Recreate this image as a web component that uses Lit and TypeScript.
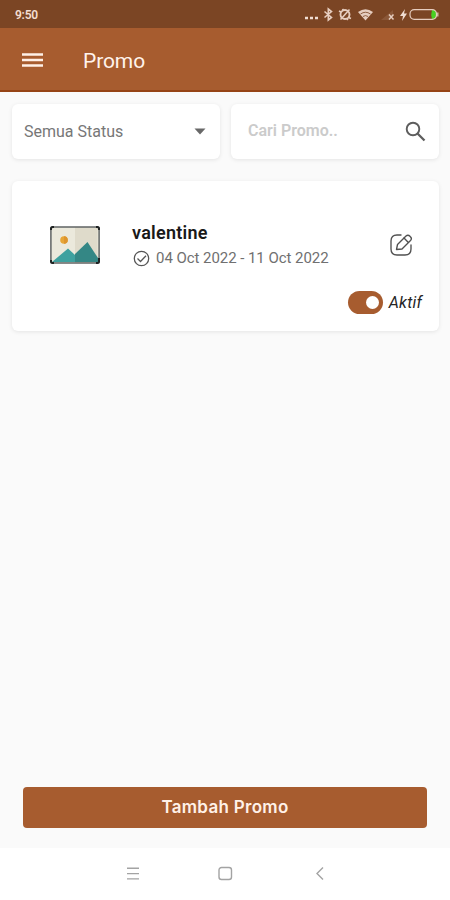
import { LitElement, html, css } from "lit";
import { customElement, property } from "lit/decorators.js";

@customElement("status-bar")
class StatusBar extends LitElement {
  static styles = css`
    :host { display: flex; height: 28px; background: #7b4524; align-items: center; box-sizing: border-box; padding: 1px 10px 0 15px; justify-content: space-between; }
    .time { font: 600 12px/14px Roboto, sans-serif; letter-spacing: -0.25px; color: #f3ddd0; }
    svg { display: block; width: 135px; height: 18px; }
  `;
  render() {
    return html`<span class="time">9:50</span>
      <svg viewBox="305 5 135 18" fill="none" stroke="#e6cdbf" stroke-width="1.2">
        <path d="M305 17h3m2 0h3m2 0h3" stroke-width="2.400" stroke="#f0ddd2" />
        <path d="M324.500 10.500l7 6-3.200 2.500v-11l3.200 2.500-7 6" stroke-width="1.600" />
        <path d="M340.500 13.500a4.500 4.500 0 1 1 9 0a4.500 4.500 0 1 1-9 0" stroke-width="1.900" />
        <path d="M340.500 18.500l9-10M339 10l2 1m7.500 5.500l2.500 1M342.500 8l1 1.500m3.500 8l.8 1.500" stroke-width="1.600" />
        <path d="M358 11q7.500-5.500 15 0L365.500 19.500z" fill="#e6cdbf" stroke="none" />
        <path d="M360.500 13q5-3.500 10 0M363 15.500q2.500-1.800 5 0" stroke="#7b4524" stroke-width=".8" />
        <path d="M381 19L393 9v5l-4 5z" fill="#8a5738" stroke="none" />
        <path d="M389 13.500l4.500 5m0-5l-4.500 5" stroke-width="1.500" />
        <path d="M405 8l-5 7h3l-1 5 5-7.500h-3z" fill="#f0ddd2" stroke="none" />
        <path d="M432 9h1.500q3 0 3 4.500t-3 4.500H432q-1.500-4.500 0-9z" fill="#48cf22" stroke="none" />
        <rect x="410" y="8.700" width="26.500" height="9.600" rx="4.300" />
        <path d="M437.800 11.500v4" />
      </svg>`;
  }
}

@customElement("app-bar")
class AppBar extends LitElement {
  @property() heading = "";
  static styles = css`
    :host { display: flex; align-items: center; gap: 40px; height: 64px; padding-left: 22px; box-sizing: border-box; background: #a75c2f; border-bottom: 2px solid #964416; }
    svg { width: 21px; height: 16px; margin-top: 2px; }
    h1 { margin: 3px 0 0; font: 400 21px/26px Roboto, sans-serif; letter-spacing: -0.1px; color: #fff3ec; }
  `;
  render() {
    return html`<svg viewBox="0 0 21 16"><path d="M0 2.500h21M0 8h21M0 13.500h21" stroke="#fff0e7" stroke-width="2.300" /></svg>
      <h1>${this.heading}</h1>`;
  }
}

@customElement("filter-row")
class FilterRow extends LitElement {
  static styles = css`
    :host { display: grid; grid-template-columns: 1fr 1fr; gap: 11px; }
    .box { height: 55px; box-sizing: border-box; background: #fff; border-radius: 6px; box-shadow: 0 1px 4px rgba(0, 0, 0, 0.09); display: flex; align-items: center; justify-content: space-between; font: 400 16px/20px Roboto, sans-serif; }
    .select { padding: 0 14px 0 12px; color: #777; letter-spacing: 0; }
    .search { padding: 0 13px 2px 17px; color: #cbcbcb; font-weight: 600; letter-spacing: 0; }
    .caret { width: 12px; height: 7px; }
    .lens { width: 21px; height: 21px; margin-top: 2px; }
  `;
  render() {
    return html`<div class="box select"><span>Semua Status</span>
        <svg class="caret" viewBox="0 0 12 7"><path d="M.5.500h11L6 6.500z" fill="#686868" /></svg></div>
      <div class="box search"><span>Cari Promo..</span>
        <svg class="lens" viewBox="0 0 21 21" fill="none" stroke="#5d5d5d" stroke-width="1.900"><circle cx="8" cy="8" r="6.300" /><path d="M12.500 12.500l7 7" stroke-width="2.300" /></svg></div>`;
  }
}

@customElement("promo-card")
class PromoCard extends LitElement {
  @property() name = "";
  @property() period = "";
  static styles = css`
    :host { display: flex; flex-direction: column; height: 150px; box-sizing: border-box; padding: 38px 17px 16px 37px; background: #fff; border-radius: 6px; box-shadow: 0 1px 4px rgba(0, 0, 0, 0.09); font-family: Roboto, sans-serif; }
    .main { display: flex; align-items: center; height: 52px; }
    .thumb { width: 52px; height: 40px; }
    .info { margin-left: 31px; flex: 1; }
    .name { font-size: 18px; line-height: 26px; font-weight: 600; letter-spacing: 0.25px; color: #191919; padding-top: 1px; height: 25px; }
    .date { display: flex; align-items: center; gap: 7px; height: 26px; font-size: 15px; color: #707070; letter-spacing: -0.05px; white-space: nowrap; }
    .check { width: 17px; height: 17px; margin-left: 1px; margin-right: -1px; }
    .edit { width: 24px; height: 24px; margin-right: 9px; }
    .state { display: flex; align-items: center; justify-content: flex-end; gap: 6px; margin-top: 19px; height: 24px; font-size: 16px; letter-spacing: 0.2px; font-style: italic; color: #252525; }
    .toggle { width: 35px; height: 23px; box-sizing: border-box; padding: 5px 4px; border-radius: 12px; background: #a75c2f; display: flex; justify-content: flex-end; }
    .knob { width: 13px; height: 13px; border-radius: 50%; background: #fff; }
  `;
  render() {
    return html`<div class="main">
        <svg class="thumb" viewBox="0 0 52 40">
          <rect x="2" y="2" width="48" height="36" rx="1.500" fill="#ebe9dc" />
          <path d="M26 2h22.500v36H26z" fill="#dfdbcb" />
          <path d="M3 37L19 23.500 26 30v7z" fill="#3ea19f" />
          <path d="M26 29L38.500 17 49 33v4H26z" fill="#348785" />
          <circle cx="15" cy="15" r="3.800" fill="#e7a637" />
          <path d="M15 11.200a3.800 3.800 0 0 1 0 7.600z" fill="#dd952e" />
          <rect x="1.900" y="1.900" width="48.200" height="36.200" rx="2.500" fill="none" stroke="#606464" stroke-width="1.500" />
          <path d="M2 5V3.500q0-1.500 1.500-1.500H5M47 2h1.500q1.500 0 1.500 1.500V5M2 35v1.500q0 1.500 1.500 1.500H5M47 38h1.500q1.500 0 1.500-1.500V33" fill="none" stroke="#202424" stroke-width="2" />
        </svg>
        <div class="info"><div class="name">${this.name}</div>
          <div class="date"><svg class="check" viewBox="0 0 17 17" fill="none" stroke="#555" stroke-width="1.250"><circle cx="8.500" cy="8.500" r="7.200" /><path d="M4.500 8.500l3 3 5.500-5.700" /></svg><span>${this.period}</span></div></div>
        <svg class="edit" viewBox="0 0 24 24" fill="none" stroke="#505050" stroke-width="1.350" stroke-linecap="round" stroke-linejoin="round">
          <path d="M12 2H8Q2 2 2 8v8q0 6 6 6h8q6 0 6-6v-4" />
          <path d="M7.500 16.500l1-5 8.500-8.500q2-1.800 4.200.400 2.200 2.100.3 4.100L13 16z" /><path d="M15 5l4.400 4.400" />
        </svg>
      </div>
      <div class="state"><span class="toggle"><span class="knob"></span></span><span>Aktif</span></div>`;
  }
}

@customElement("nav-bar")
class NavBar extends LitElement {
  static styles = css`
    :host { display: flex; height: 52px; align-items: center; justify-content: center; gap: 78px; background: #fff; }
    svg { width: 16px; height: 16px; fill: none; stroke: #a3a3a3; stroke-width: 1.4; }
  `;
  render() {
    return html`<svg viewBox="0 0 16 16"><path d="M4 2.300h12M4 7.600h12M4 12.900h12" /></svg>
      <svg viewBox="0 0 16 16"><rect x="2" y="1.500" width="12.500" height="12" rx="2.500" /></svg>
      <svg viewBox="0 0 16 16"><path d="M12 1.500L6 7.500l6 6" /></svg>`;
  }
}

@customElement("app-root")
class AppRoot extends LitElement {
  static styles = css`
    :host { display: flex; flex-direction: column; height: 900px; background: #fafafa; }
    main { flex: 1; display: flex; flex-direction: column; gap: 22px; padding: 12px 11px 20px 12px; }
    .add { margin: auto 12px 0 11px; height: 41px; border: 0; border-radius: 4px; padding: 0 0 1px; background: #a75c2f; color: #fff1e8; font: 600 17px/40px Inter, sans-serif; letter-spacing: 0.3px; }
  `;
  render() {
    return html`<status-bar></status-bar><app-bar heading="Promo"></app-bar>
      <main><filter-row></filter-row>
        <promo-card name="valentine" period="04 Oct 2022 - 11 Oct 2022"></promo-card>
        <button class="add">Tambah Promo</button></main>
      <nav-bar></nav-bar>`;
  }
}
